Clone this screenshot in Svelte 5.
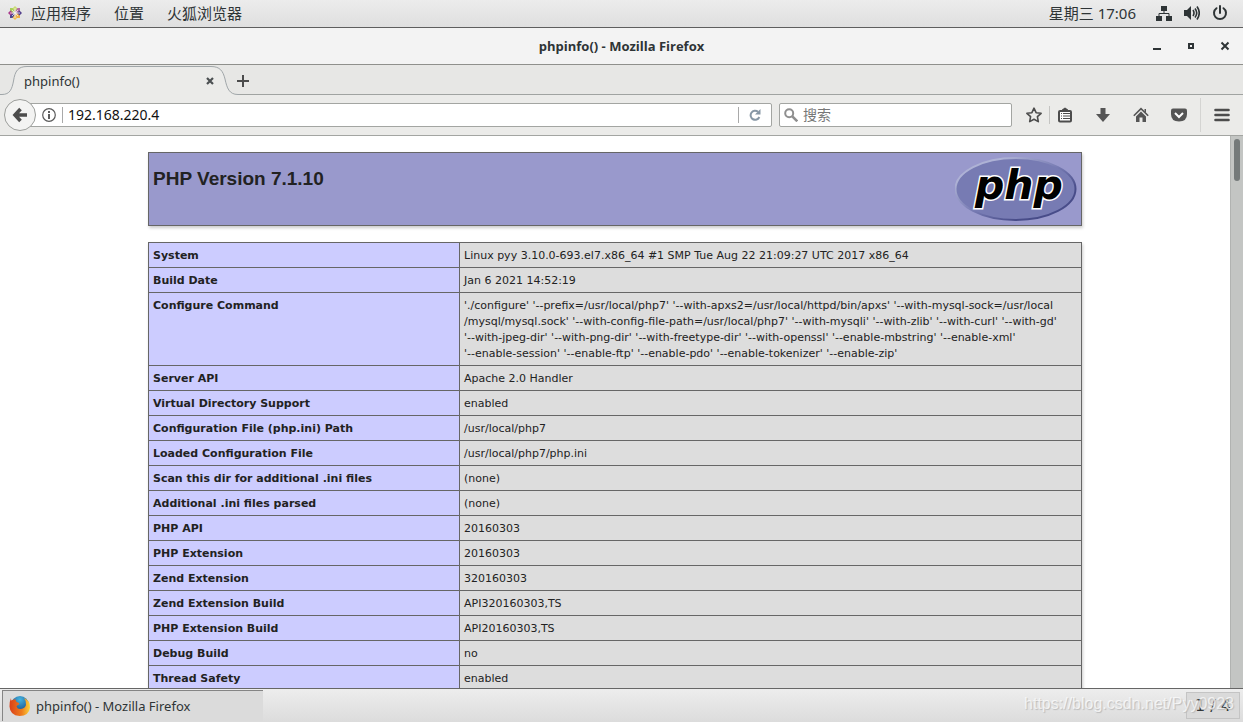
<script>
  const menus = ['位置', '火狐浏览器'];
  const configure = [
    "'./configure' '--prefix=/usr/local/php7' '--with-apxs2=/usr/local/httpd/bin/apxs' '--with-mysql-sock=/usr/local",
    "/mysql/mysql.sock' '--with-config-file-path=/usr/local/php7' '--with-mysqli' '--with-zlib' '--with-curl' '--with-gd'",
    "'--with-jpeg-dir' '--with-png-dir' '--with-freetype-dir' '--with-openssl' '--enable-mbstring' '--enable-xml'",
    "'--enable-session' '--enable-ftp' '--enable-pdo' '--enable-tokenizer' '--enable-zip'"
  ].join('\n');
  const rows = [
    ['System', 'Linux pyy 3.10.0-693.el7.x86_64 #1 SMP Tue Aug 22 21:09:27 UTC 2017 x86_64'],
    ['Build Date', 'Jan 6 2021 14:52:19'],
    ['Configure Command', configure],
    ['Server API', 'Apache 2.0 Handler'],
    ['Virtual Directory Support', 'enabled'],
    ['Configuration File (php.ini) Path', '/usr/local/php7'],
    ['Loaded Configuration File', '/usr/local/php7/php.ini'],
    ['Scan this dir for additional .ini files', '(none)'],
    ['Additional .ini files parsed', '(none)'],
    ['PHP API', '20160303'],
    ['PHP Extension', '20160303'],
    ['Zend Extension', '320160303'],
    ['Zend Extension Build', 'API320160303,TS'],
    ['PHP Extension Build', 'API20160303,TS'],
    ['Debug Build', 'no'],
    ['Thread Safety', 'enabled']
  ];
  let url = $state('192.168.220.4');
  let query = $state('');
</script>

<div class="desktop">
  <header class="panel">
    <nav>
      <button class="apps">
        <svg width="14" height="14" viewBox="0 0 14 14" aria-hidden="true">
          <path d="M2 2h4.500v4.500H2z" fill="#a9cf5a" /><path d="M7.500 2H12v4.500H7.500z" fill="#b56aa4" />
          <path d="M2 7.500h4.500V12H2z" fill="#4a4790" /><path d="M7.500 7.500H12V12H7.500z" fill="#efb14a" />
          <path d="M7 0l2.500 2.500L7 5 4.500 2.500z" fill="#c9dc70" /><path d="M14 7l-2.500 2.500L9 7l2.500-2.500z" fill="#54408c" />
          <path d="M7 14l-2.500-2.500L7 9l2.500 2.500z" fill="#efbd55" /><path d="M0 7l2.500-2.500L5 7 2.500 9.500z" fill="#a83a8c" />
          <path d="M7 2v10M2 7h10M4 4l6 6M10 4l-6 6" stroke="#f3eef0" stroke-width="0.800" />
        </svg>
        应用程序
      </button>
      {#each menus as menu}<button>{menu}</button>{/each}
    </nav>
    <div class="status">
      <time>星期三 17:06</time>
      <button aria-label="网络">
        <svg width="16" height="16" viewBox="0 0 16 16"><path d="M5 1h6v5H5zM0 11h6v5H0zM10 11h6v5h-6z" fill="#2e3436" /><path d="M8 6v3M3 11V8.500h10V11" fill="none" stroke="#2e3436" /></svg>
      </button>
      <button aria-label="音量">
        <svg width="16" height="16" viewBox="0 0 16 16"><path d="M0 5h3l4-4v14l-4-4H0z" fill="#2e3436" /><path d="M9 5q2 3 0 6M11 3.500q3.500 4.500 0 9M13 1.500q4.500 6.500 0 13" fill="none" stroke="#2e3436" stroke-width="1.600" /></svg>
      </button>
      <button aria-label="关机">
        <svg width="16" height="16" viewBox="0 0 16 16"><path d="M4.500 3.200a6 6 0 1 0 7 0M8 1v7" fill="none" stroke="#2e3436" stroke-width="2" stroke-linecap="round" /></svg>
      </button>
    </div>
  </header>

  <div class="titlebar">
    <span></span>
    <h2>phpinfo() - Mozilla Firefox</h2>
    <div class="controls">
      <button aria-label="最小化"><svg width="10" height="10" viewBox="0 0 10 10"><path d="M1 7h8v2H1z" fill="#2e3436" /></svg></button>
      <button aria-label="最大化"><svg width="10" height="10" viewBox="0 0 10 10"><path d="M3 3h4v4H3z" fill="none" stroke="#2e3436" stroke-width="2" /></svg></button>
      <button aria-label="关闭"><svg width="10" height="10" viewBox="0 0 10 10"><path d="M1.500 1.500l7 7M8.500 1.500l-7 7" stroke="#2e3436" stroke-width="2" /></svg></button>
    </div>
  </div>

  <div class="tabs">
    <div class="tab">
      <svg class="shape" width="240" height="30" viewBox="0 0 240 30" aria-hidden="true">
        <path d="M0 29.500H2C10 29.500 12 24 13.500 16C15 6 18 1.500 27 1.500H211C220 1.500 223 6 225 14C227 23 229 29.500 238 29.500H240V30H0z" fill="#ebebe9" />
        <path d="M0 29.500H2C10 29.500 12 24 13.500 16C15 6 18 1.500 27 1.500H211C220 1.500 223 6 225 14C227 23 229 29.500 238 29.500H240" fill="none" stroke="#a0a6a9" />
      </svg>
      <span class="tabname">phpinfo()</span>
      <button class="tabclose" aria-label="关闭标签页"><svg width="8" height="8" viewBox="0 0 8 8"><path d="M1 1l6 6M7 1l-6 6" stroke="#4c5052" stroke-width="2.200" /></svg></button>
    </div>
    <button class="newtab" aria-label="新建标签页"><svg width="12" height="12" viewBox="0 0 12 12"><path d="M6 0v12M0 6h12" stroke="#4c4c4c" stroke-width="2" /></svg></button>
    <div class="rest"></div>
  </div>

  <div class="toolbar">
    <button class="back" aria-label="后退"><svg width="16" height="16" viewBox="0 0 16 16"><path d="M8.500 2L3 8l5.500 6M3 8h12" fill="none" stroke="#4c4c4c" stroke-width="3.600" /></svg></button>
    <div class="urlbar">
      <svg width="14" height="14" viewBox="0 0 14 14" aria-hidden="true"><circle cx="7" cy="7" r="6.300" fill="none" stroke="#5a5a5a" stroke-width="1.200" /><path d="M7 3v2M7 6v5" stroke="#4c4c4c" stroke-width="1.800" /></svg>
      <i class="bar"></i>
      <input aria-label="网址" bind:value={url} />
      <i class="bar"></i>
      <button class="reload" aria-label="刷新"><svg width="12" height="12" viewBox="0 0 12 12"><path d="M9 2.800A4.500 4.500 0 1 0 10.300 8" fill="none" stroke="#8797a5" stroke-width="2" /><path d="M11.500 0v5.500H6z" fill="#8797a5" /></svg></button>
    </div>
    <div class="search">
      <svg width="14" height="14" viewBox="0 0 14 14" aria-hidden="true"><circle cx="5.200" cy="5.200" r="4" fill="none" stroke="#8f8f8f" stroke-width="2" /><path d="M8.300 8.300l5 5" stroke="#8f8f8f" stroke-width="2.600" /></svg>
      <input aria-label="搜索" placeholder="搜索" bind:value={query} />
    </div>
    <div class="tools">
      <button class="star" aria-label="收藏"><svg width="16" height="16" viewBox="0 0 16 16"><path d="M8 1.200l2.100 4.500 5 .6-3.700 3.400.9 4.900L8 12.200l-4.300 2.400.9-4.900L.9 6.300l5-.6z" fill="none" stroke="#4c4c4c" stroke-width="1.600" stroke-linejoin="round" /></svg></button>
      <i class="sep"></i>
      <button aria-label="书签"><svg width="16" height="16" viewBox="0 0 16 16"><path d="M5 3.500V2.500L8 .5l3 2v1z" fill="#4c4c4c" /><rect x="2" y="4" width="12" height="10.500" rx="1" fill="#fff" stroke="#4c4c4c" stroke-width="2" /><path d="M4 6.500h1M6 6.500h7M4 9h1M6 9h7M4 11.500h1M6 11.500h7" stroke="#4c4c4c" stroke-width="1.200" /></svg></button>
      <button aria-label="下载"><svg width="16" height="16" viewBox="0 0 16 16"><path d="M5.500 1h5v6H15l-7 8-7-8h4.500z" fill="#555" /></svg></button>
      <button aria-label="主页"><svg width="16" height="16" viewBox="0 0 16 16"><path d="M.8 8.800L8 1.600l7.200 7.200" fill="none" stroke="#555" stroke-width="1.600" /><path d="M11.500 2H13v4l-1.500-1.500zM3 9.500l5-5 5 5V15H9.500v-4.500h-3V15H3z" fill="#555" /></svg></button>
      <button aria-label="Pocket"><svg width="16" height="16" viewBox="0 0 16 16"><path d="M0 3.500Q0 1.500 2 1.500h12q2 0 2 2V7q0 7.500-8 7.500T0 7z" fill="#555" /><path d="M4 6l4 4 4-4" fill="none" stroke="#fff" stroke-width="2" /></svg></button>
      <i class="sep tall"></i>
      <button aria-label="菜单"><svg width="16" height="14" viewBox="0 0 16 14"><path d="M1.500 2h13M1.500 7h13M1.500 12h13" stroke="#4c4c4c" stroke-width="2.600" stroke-linecap="round" /></svg></button>
    </div>
  </div>

  <main>
    <div class="page">
      <section class="banner">
        <h1>PHP Version 7.1.10</h1>
        <svg width="122" height="66" viewBox="0 0 122 66" role="img" aria-label="PHP logo">
          <defs>
            <linearGradient id="rim" x1="0" y1="0" x2="1" y2="1"><stop offset="0.200" stop-color="#aeb2d5" /><stop offset="0.500" stop-color="#777bb3" /><stop offset="0.750" stop-color="#484c89" /></linearGradient>
          </defs>
          <ellipse cx="60.500" cy="33" rx="60" ry="31" fill="#777bb3" stroke="url(#rim)" stroke-width="2" />
          <text x="20" y="43" font-family="DejaVu Sans, sans-serif" font-size="41" font-weight="700" font-style="italic" fill="#000" stroke="#fff" stroke-width="3" paint-order="stroke">php</text>
        </svg>
      </section>
      <table>
        <tbody>
          {#each rows as [name, value]}
            <tr><th scope="row">{name}</th><td>{value}</td></tr>
          {/each}
        </tbody>
      </table>
    </div>
    <div class="scroll"><div class="thumb"></div></div>
  </main>

  <footer>
    <button class="task">
      <svg width="22" height="22" viewBox="0 0 22 22" aria-hidden="true">
        <defs>
          <radialGradient id="globe" cx="0.500" cy="0.200" r="0.800"><stop offset="0" stop-color="#43b4e0" /><stop offset="1" stop-color="#123a7c" /></radialGradient>
          <linearGradient id="fox" x1="0" y1="0" x2="1" y2="0"><stop offset="0" stop-color="#d9401a" /><stop offset="0.600" stop-color="#ef7d1c" /><stop offset="1" stop-color="#fbd43c" /></linearGradient>
        </defs>
        <circle cx="11" cy="10" r="9" fill="url(#globe)" />
        <path d="M2 3q0 2 .5 2.500Q4 4 7 4.500 6 6.500 9 7.500q2 .5 1 2-2 .5-2.500 2 1 3 4.500 2.500 4-.5 5-4 .5-4-2-7 6.500 3 6 9.500Q20 21 10.500 21 1 20.500.5 11.500.5 6 2 3z" fill="url(#fox)" />
      </svg>
      phpinfo() - Mozilla Firefox
    </button>
    <button class="workspace">1 / 4</button>
    <span class="watermark">https://blog.csdn.net/Pyy0928</span>
  </footer>
</div>

<style>
  :global(body) { margin: 0; overflow: hidden; }
  .desktop { display: flex; flex-direction: column; height: 100vh; background: #fff; color: #2e3436; font: 14px/20px "Noto Sans", "Noto Sans CJK SC", sans-serif; }
  button, input { margin: 0; padding: 0; border: 0; background: none; font: inherit; color: inherit; }
  button { display: flex; align-items: center; justify-content: center; white-space: nowrap; }
  input { outline: 0; min-width: 0; flex: 1; }
  svg { flex: none; display: block; }
  i { flex: none; }

  .panel { display: flex; justify-content: space-between; height: 27px; flex: none; padding: 0 15px 0 8px; border-bottom: 1px solid #5e5e5e; background: linear-gradient(#ececec, #dfdfdf); font-size: 15px; line-height: 24px; }
  nav, .status { display: flex; align-items: center; }
  nav { gap: 23px; padding-bottom: 1px; }
  .apps { gap: 9px; }
  .status { gap: 12px; padding-bottom: 1px; }
  time { margin-right: 8px; }

  .titlebar { display: grid; grid-template-columns: 1fr auto 1fr; align-items: center; height: 36px; flex: none; border-bottom: 1px solid #8f908c; background: #f3f3f3; }
  h2 { margin: 0; font: 700 13px/20px "Open Sans", sans-serif; }
  .controls { display: flex; justify-content: flex-end; gap: 24px; padding-right: 13px; }

  .tabs { display: flex; height: 30px; flex: none; background: #e7e7e5; }
  .tab { position: relative; display: flex; align-items: center; justify-content: space-between; width: 190px; padding: 2px 26px 0 24px; }
  .shape { position: absolute; left: 0; top: 0; }
  .tabname, .tabclose { position: relative; }
  .tabname { font-size: 13px; }
  .newtab { position: relative; align-self: center; width: 24px; margin-left: -9px; padding: 2px 0 0; }
  .rest { flex: 1; margin-left: -15px; border-bottom: 1px solid #a0a3a1; }

  .toolbar { display: flex; align-items: center; height: 40px; flex: none; padding: 0 13px 0 4px; border-bottom: 1px solid #a3a5a2; background: #ebebe9; }
  .back { box-sizing: border-box; position: relative; width: 32px; height: 32px; flex: none; border: 1px solid #9c9e9b; border-radius: 50%; background: #f3f3f2; }
  .urlbar, .search { box-sizing: border-box; display: flex; align-items: center; height: 24px; border: 1px solid #a3a5a2; border-radius: 2px; background: #fff; }
  .urlbar { flex: 1; margin-left: -8px; padding-left: 13px; color: #111; }
  .bar { width: 1px; height: 16px; background: #a9a9a9; }
  .urlbar .bar:first-of-type { margin: 0 5px 0 6px; }
  .reload { width: 32px; }
  .search { flex: 0 1 233px; margin-left: 7px; padding: 0 5px 0 4px; gap: 5px; }
  .search input::placeholder { color: #777; opacity: 1; }
  .tools { display: flex; align-items: center; gap: 22px; margin-left: 14px; }
  .star { margin-right: -15px; }
  .sep { width: 1px; height: 18px; margin-right: -15px; background: #c4c4c2; }
  .tall { height: 34px; margin: 0 -9px; background: #d4d4d2; }

  main { display: flex; flex: 1; min-height: 0; overflow: hidden; }
  .page { flex: 1; padding: 16px; color: #222; }
  .scroll { width: 12px; padding: 3px 0; border-left: 1px solid #b1b3b1; background: #c3c5c3; }
  .thumb { width: 6px; height: 42px; margin: 0 auto; border-radius: 3px; background: #757a7a; }
  .banner, table { box-sizing: border-box; width: 100%; max-width: 934px; margin: 0 auto; box-shadow: 1px 2px 3px #ccc; }
  .banner { display: flex; justify-content: space-between; align-items: flex-start; height: 74px; padding: 3px 4px; border: 1px solid #666; background: #9999cc; }
  h1 { margin: 11px 0 0; font: 700 19px/24px "Liberation Sans", sans-serif; }
  table { margin-top: 16px; border-collapse: collapse; table-layout: fixed; font: 11px/16px "DejaVu Sans", sans-serif; }
  th, td { padding: 5px 4px 3px; border: 1px solid #666; text-align: left; vertical-align: top; }
  th { width: 302px; background: #ccccff; font-weight: 700; }
  td { background: #ddd; white-space: pre-line; }

  footer { position: relative; z-index: 1; display: flex; align-items: center; justify-content: space-between; box-sizing: border-box; height: 34px; flex: none; padding: 0 3px 0 2px; border-top: 1px solid #666; background: linear-gradient(#ededed, #dcdcdc); }
  .task { box-sizing: border-box; justify-content: flex-start; gap: 5px; width: 261px; height: 31px; padding-left: 6px; border: solid #858585; border-width: 1px 0 0 1px; background: #dbdbdb; font-size: 13px; }
  .workspace { box-sizing: border-box; width: 54px; height: 27px; border: 1px solid #c4c4c4; background: #dadada; font: 16px/24px "DejaVu Sans", sans-serif; }
  .watermark { position: absolute; right: 9px; top: 5px; font: 16px/20px "Liberation Sans", sans-serif; color: rgba(255, 255, 255, 0.7); text-shadow: 1px 1px 1px #bbb; pointer-events: none; }
</style>
